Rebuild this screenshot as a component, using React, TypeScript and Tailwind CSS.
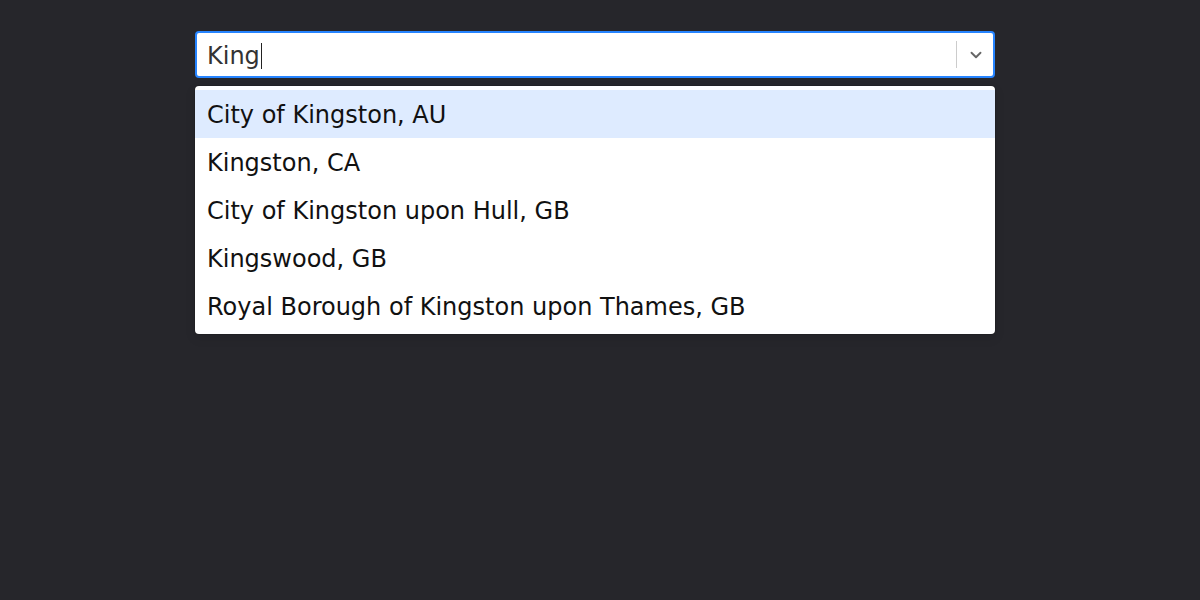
import { ChevronDown } from "lucide-react";

const options = [
  "City of Kingston, AU",
  "Kingston, CA",
  "City of Kingston upon Hull, GB",
  "Kingswood, GB",
  "Royal Borough of Kingston upon Thames, GB",
];

export default function App() {
  return (
    <div
      className="min-h-[600px] w-full bg-[#26262b] pt-[31px]"
      style={{ fontFamily: '"DejaVu Sans", sans-serif' }}
    >
      <div className="ml-[195px] w-[800px]">
        <div className="flex h-[47px] items-center rounded-[4px] border-2 border-[#2684ff] bg-white">
          <div className="flex flex-1 items-center pl-[10px] pt-[2px] text-[24px] text-[#333]">
            King
            <span className="ml-[1px] inline-block h-[26px] w-px bg-[#222]" />
          </div>
          <div className="h-[27px] w-px bg-[#ccc]" />
          <div className="flex w-[36px] items-center justify-center pl-[1px] text-[#666]">
            <ChevronDown size={18} strokeWidth={2.5} />
          </div>
        </div>

        <div className="mt-[8px] rounded-[4px] bg-white py-[4px] shadow-[0_0_0_1px_rgba(0,0,0,0.1),0_4px_11px_rgba(0,0,0,0.1)]">
          {options.map((o, i) => (
            <div
              key={o}
              className={`flex h-[48px] items-center px-[12px] pt-[2px] text-[24px] text-[#111] ${
                i === 0 ? "bg-[#deebff]" : ""
              }`}
            >
              {o}
            </div>
          ))}
        </div>
      </div>
    </div>
  );
}
